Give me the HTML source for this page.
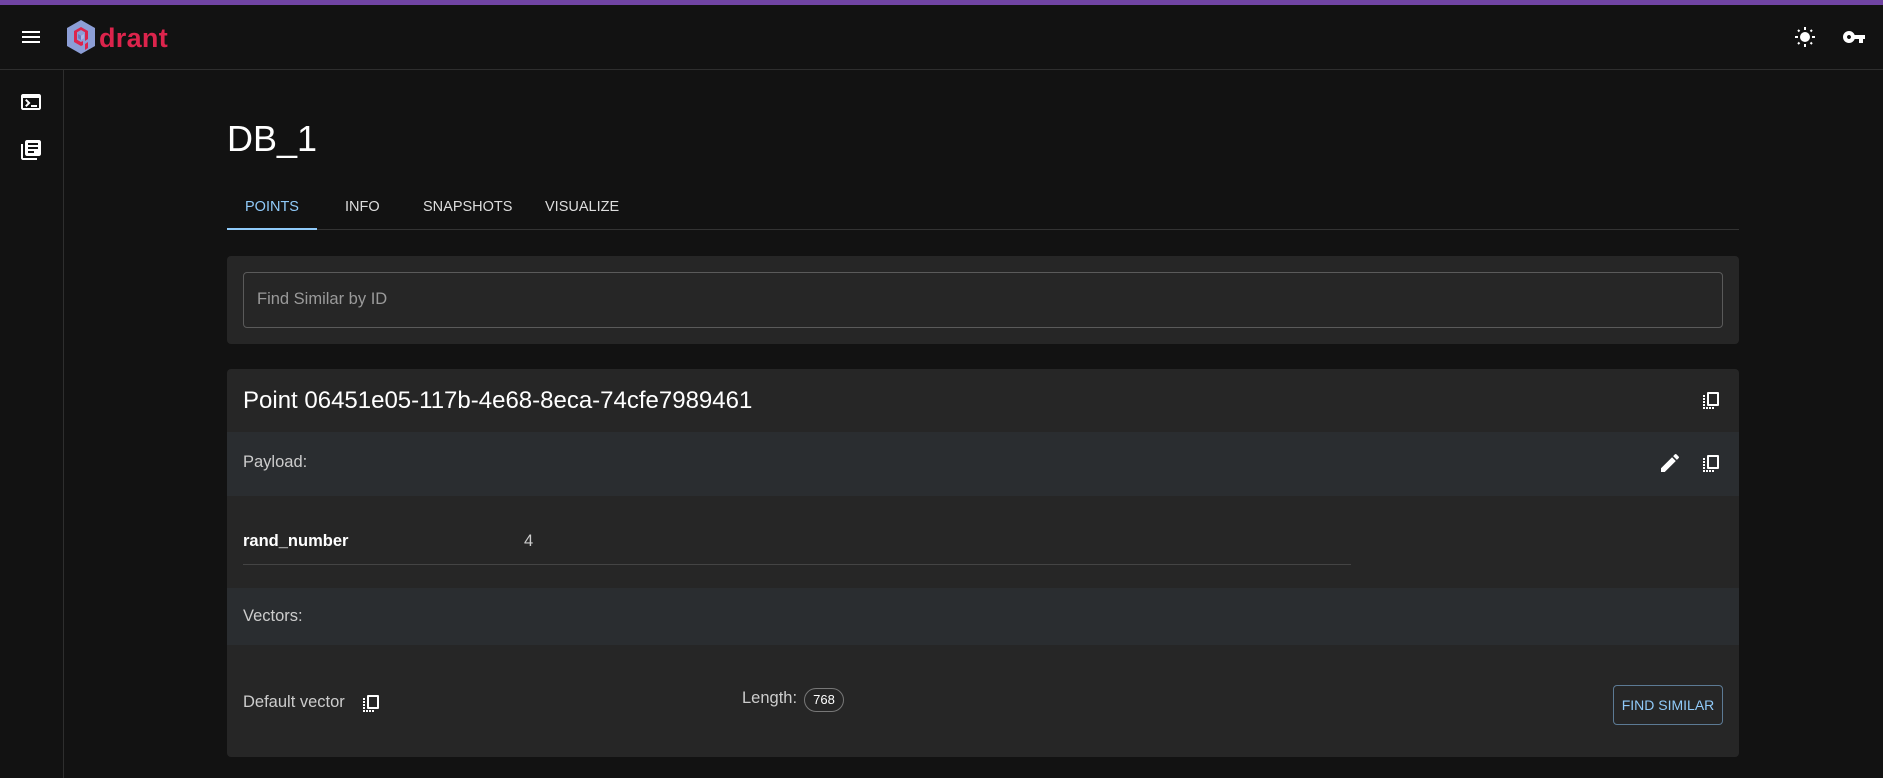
<!DOCTYPE html>
<html><head><meta charset="utf-8"><style>
*{box-sizing:border-box;margin:0;padding:0}
body{width:1883px;height:778px;background:#121212;font-family:"Liberation Sans",Arial,sans-serif;color:#fff;position:relative;overflow:hidden}
.a{position:absolute}
svg{display:block}
</style></head><body>
<div class="a" style="left:0;top:0;width:1883px;height:5px;background:#7044a3"></div>
<div class="a" style="left:0;top:69px;width:1883px;height:1px;background:#2e2e2e"></div>
<div class="a" style="left:63px;top:70px;width:1px;height:708px;background:#2e2e2e"></div>
<svg class="a" style="left:19px;top:25px" width="24" height="24" viewBox="0 0 24 24"><path fill="#fff" d="M3 18h18v-2H3v2zm0-5h18v-2H3v2zm0-7v2h18V6H3z"/></svg>
<svg class="a" style="left:66px;top:19px" width="30" height="36" viewBox="0 0 30 36"><path fill="#8c9ed6" d="M15 1 29 9v18l-14 8L1 27V9z"/><path fill="#dc244c" d="M15 8 22 12v11l-3 2v6l3-2V12L15 8 8 12v11l7 4 2-1v-4l-2 1-4-2.3v-7.4L15 11l4 2.3V22l3-2V12z"/><path fill="#6b7cc0" d="M12 15l3 1.7V21l-3-1.7z"/><path fill="#aab8e8" d="M15 16.7l3-1.7v4.3l-3 1.7z"/></svg>
<div class="a" style="left:99px;top:23px;font-size:27px;font-weight:bold;color:#dc244c;letter-spacing:0.3px">drant</div>
<svg class="a" style="left:1793px;top:25px" width="24" height="24" viewBox="0 0 24 24"><circle cx="12" cy="12" r="5" fill="#fff"/><g stroke="#fff" stroke-width="2"><path d="M12 2v3M12 19v3M2 12h3M19 12h3M5 5l1.5 1.5M17.5 17.5L19 19M5 19l1.5-1.5M17.5 6.5L19 5"/></g></svg>
<svg class="a" style="left:1842px;top:25px" width="24" height="24" viewBox="0 0 24 24"><path fill="#fff" d="M12.65 10C11.83 7.67 9.61 6 7 6c-3.31 0-6 2.69-6 6s2.69 6 6 6c2.61 0 4.83-1.67 5.65-4H17v4h4v-4h2v-4H12.65zM7 14c-1.1 0-2-.9-2-2s.9-2 2-2 2 .9 2 2-.9 2-2 2z"/></svg>
<svg class="a" style="left:19px;top:90px" width="24" height="24" viewBox="0 0 24 24"><path fill="#fff" d="M20 4H4c-1.11 0-2 .9-2 2v12c0 1.1.89 2 2 2h16c1.1 0 2-.9 2-2V6c0-1.1-.89-2-2-2zm0 14H4V8h16v10zm-2-1h-6v-2h6v2zM7.5 17l-1.41-1.41L8.67 13l-2.59-2.59L7.5 9l4 4-4 4z"/></svg>
<svg class="a" style="left:19px;top:138px" width="24" height="24" viewBox="0 0 24 24"><path fill="#fff" d="M4 6H2v14c0 1.1.9 2 2 2h14v-2H4V6zm16-4H8c-1.1 0-2 .9-2 2v12c0 1.1.9 2 2 2h12c1.1 0 2-.9 2-2V4c0-1.1-.9-2-2-2zm-1 9H9V9h10v2zm-4 4H9v-2h6v2zm4-8H9V5h10v2z"/></svg>
<div class="a" style="left:227px;top:118px;font-size:36px;color:#fff">DB_1</div>
<div class="a" style="left:227px;top:229px;width:1512px;height:1px;background:#333"></div>
<div class="a" style="left:227px;top:228px;width:90px;height:2px;background:#90caf9"></div>
<div class="a" style="top:199px;font-size:14.5px;left:245px;color:#90caf9">POINTS</div>
<div class="a" style="top:199px;font-size:14.5px;left:345px;color:#ddd">INFO</div>
<div class="a" style="top:199px;font-size:14.5px;left:423px;color:#ddd">SNAPSHOTS</div>
<div class="a" style="top:199px;font-size:14.5px;left:545px;color:#ddd">VISUALIZE</div>
<div class="a" style="left:227px;top:256px;width:1512px;height:88px;background:#262626;border-radius:4px"></div>
<div class="a" style="left:243px;top:272px;width:1480px;height:56px;border:1px solid #5a5a5a;border-radius:4px"></div>
<div class="a" style="left:257px;top:290px;font-size:16.5px;color:#9a9a9a">Find Similar by ID</div>
<div class="a" style="left:227px;top:369px;width:1512px;height:388px;background:#262626;border-radius:4px;overflow:hidden">
  <div class="a" style="left:0;top:63px;width:1512px;height:64px;background:#2a2d30"></div>
  <div class="a" style="left:0;top:219px;width:1512px;height:57px;background:#2a2d30"></div>
</div>
<div class="a" style="left:243px;top:387px;font-size:24px;color:#fff">Point 06451e05-117b-4e68-8eca-74cfe7989461</div>
<svg class="a" style="left:1699px;top:388px" width="24" height="24" viewBox="0 0 24 24"><path fill="#fff" d="M9 4h10a1 1 0 0 1 1 1v12a1 1 0 0 1-1 1H9a1 1 0 0 1-1-1V5a1 1 0 0 1 1-1zm1 2v10h8V6z"/><path fill="#fff" d="M4 7h2v2H4zM4 10h2v2H4zM4 13h2v2H4zM4 16h2v2H4zM4 19h2v2H4zM7 19h2v2H7zM10 19h2v2h-2zM13 19h2v2h-2z"/></svg>
<div class="a" style="left:243px;top:453px;font-size:16.5px;color:#ccc">Payload:</div>
<svg class="a" style="left:1658px;top:451px" width="24" height="24" viewBox="0 0 24 24"><path fill="#fff" d="M3 17.25V21h3.75L17.81 9.94l-3.75-3.75L3 17.25zM20.71 7.04a1 1 0 0 0 0-1.41l-2.34-2.34a1 1 0 0 0-1.41 0l-1.83 1.83 3.75 3.75 1.83-1.83z"/></svg>
<svg class="a" style="left:1699px;top:451px" width="24" height="24" viewBox="0 0 24 24"><path fill="#fff" d="M9 4h10a1 1 0 0 1 1 1v12a1 1 0 0 1-1 1H9a1 1 0 0 1-1-1V5a1 1 0 0 1 1-1zm1 2v10h8V6z"/><path fill="#fff" d="M4 7h2v2H4zM4 10h2v2H4zM4 13h2v2H4zM4 16h2v2H4zM4 19h2v2H4zM7 19h2v2H7zM10 19h2v2h-2zM13 19h2v2h-2z"/></svg>
<div class="a" style="left:243px;top:532px;font-size:16.5px;font-weight:bold;color:#fff">rand_number</div>
<div class="a" style="left:524px;top:532px;font-size:16.5px;color:#ccc">4</div>
<div class="a" style="left:243px;top:564px;width:1108px;height:1px;background:#444"></div>
<div class="a" style="left:243px;top:607px;font-size:16.5px;color:#ccc">Vectors:</div>
<div class="a" style="left:243px;top:693px;font-size:16.5px;color:#ccc">Default vector</div>
<svg class="a" style="left:359px;top:691px" width="24" height="24" viewBox="0 0 24 24"><path fill="#fff" d="M9 4h10a1 1 0 0 1 1 1v12a1 1 0 0 1-1 1H9a1 1 0 0 1-1-1V5a1 1 0 0 1 1-1zm1 2v10h8V6z"/><path fill="#fff" d="M4 7h2v2H4zM4 10h2v2H4zM4 13h2v2H4zM4 16h2v2H4zM4 19h2v2H4zM7 19h2v2H7zM10 19h2v2h-2zM13 19h2v2h-2z"/></svg>
<div class="a" style="left:742px;top:689px;font-size:16.5px;color:#ccc">Length:</div>
<div class="a" style="left:804px;top:688px;width:40px;height:24px;border:1px solid #777;border-radius:12px;font-size:13px;color:#fff;text-align:center;line-height:22px">768</div>
<div class="a" style="left:1613px;top:685px;width:110px;height:40px;border:1px solid #5c7a94;border-radius:4px;font-size:14px;color:#90caf9;text-align:center;line-height:38px">FIND SIMILAR</div>
</body></html>
